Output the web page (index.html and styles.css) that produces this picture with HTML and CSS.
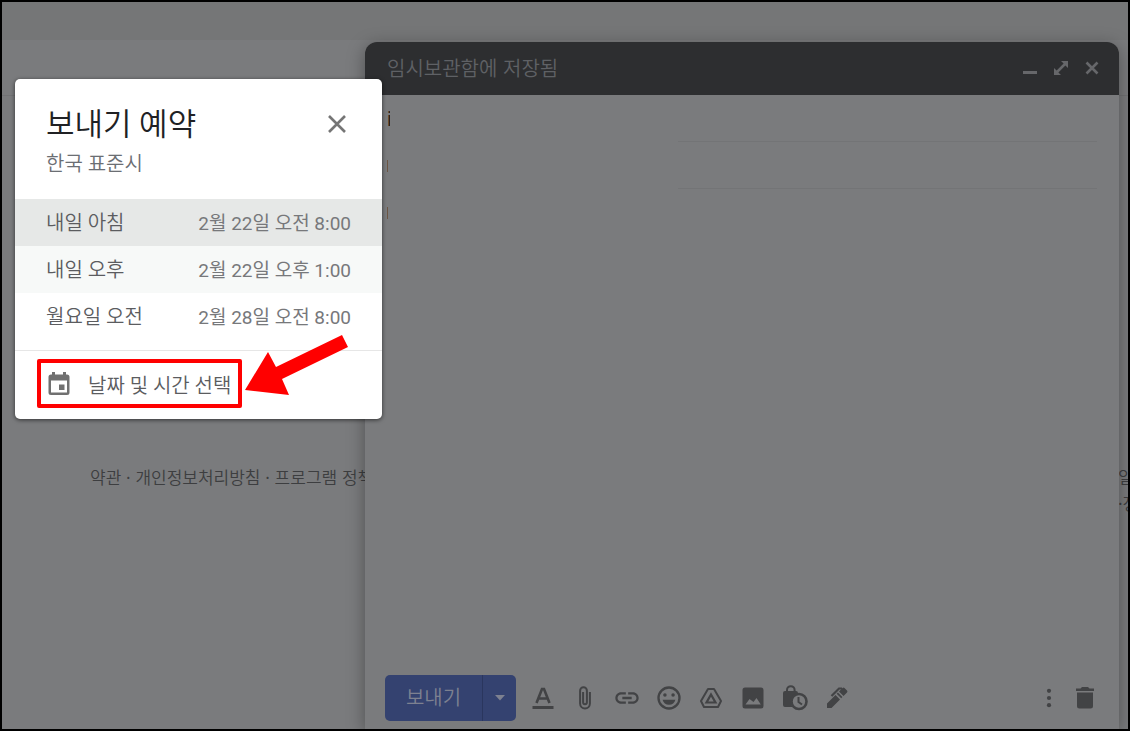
FILE: index.html
```html
<!DOCTYPE html>
<html lang="ko">
<head>
    <meta charset="UTF-8">
    <meta name="viewport" content="width=device-width, initial-scale=1.0">
    <title>보내기 예약</title>
    <link rel="stylesheet" href="styles.css">
</head>
<body>
    <div class="screen">
        <div class="topbar"></div>
        <div class="list"></div>
        <footer class="footer">
            <div>약관 · 개인정보처리방침 · 프로그램 정책</div>
            <div class="activity">
                <div>일</div>
                <div>·정</div>
            </div>
        </footer>

        <section class="compose">
            <header class="compose-header">
                <span class="compose-title">임시보관함에 저장됨</span>
                <button class="icon-btn" aria-label="최소화">
                    <svg width="16" height="16" viewBox="0 0 16 16"><path d="M1 11h14v3H1z"/></svg>
                </button>
                <button class="icon-btn" aria-label="전체화면">
                    <svg width="16" height="16" viewBox="0 0 16 16"><path d="M8 1h7v7l-2.600-2.600-7 7L8 15H1V8l2.600 2.600 7-7z"/></svg>
                </button>
                <button class="icon-btn" aria-label="닫기">
                    <svg width="16" height="16" viewBox="0 0 16 16"><path d="M2.500 2.500l11 11M13.500 2.500l-11 11" fill="none" stroke="currentColor" stroke-width="2.600"/></svg>
                </button>
            </header>
            <div class="compose-body">
                <div class="field"><span class="letter">i</span><span class="line"></span></div>
                <div class="field"><span class="caret"></span><span class="line"></span></div>
                <div class="field"><span class="caret"></span></div>
            </div>
            <div class="toolbar">
                <div class="send-group">
                    <button class="send">보내기</button>
                    <button class="send-more" aria-label="보내기 옵션 더보기">
                        <svg width="10" height="6" viewBox="0 0 10 6"><path d="M0 0h10L5 5.500z"/></svg>
                    </button>
                </div>
                <button class="icon-btn" aria-label="서식 옵션">
                    <svg width="28" height="28" viewBox="0 0 28 28"><path d="M3.500 22h21v3h-21z"/><path d="M7.500 19L13 5h2l5.500 14M9.500 14.500h9" fill="none" stroke="currentColor" stroke-width="2.600"/></svg>
                </button>
                <button class="icon-btn" aria-label="파일 첨부">
                    <svg width="28" height="28" viewBox="0 0 28 28"><path d="M18.900 8v11.500a4.900 4.900 0 0 1-9.800 0V6.700a3.400 3.400 0 0 1 6.800 0v11.600a1.900 1.900 0 0 1-3.800 0V8" fill="none" stroke="currentColor" stroke-width="2"/></svg>
                </button>
                <button class="icon-btn" aria-label="링크 삽입">
                    <svg width="28" height="28" viewBox="0 0 24 24"><path d="M3.900 12c0-1.710 1.390-3.100 3.100-3.100h4V7H7c-2.760 0-5 2.240-5 5s2.240 5 5 5h4v-1.900H7c-1.710 0-3.100-1.390-3.100-3.100zM8 13h8v-2H8v2zm9-6h-4v1.900h4c1.710 0 3.100 1.390 3.100 3.100s-1.390 3.100-3.100 3.100h-4V17h4c2.760 0 5-2.240 5-5s-2.240-5-5-5z"/></svg>
                </button>
                <button class="icon-btn" aria-label="이모티콘 삽입">
                    <svg width="28" height="28" viewBox="0 0 24 24"><path d="M12 2a10 10 0 1 0 0 20 10 10 0 0 0 0-20zm0 18a8 8 0 1 1 0-16 8 8 0 0 1 0 16z"/><circle cx="8.500" cy="9.500" r="1.500"/><circle cx="15.500" cy="9.500" r="1.500"/><path d="M6.500 13.500h11c-.6 2.700-2.700 4.300-5.500 4.300s-4.900-1.600-5.500-4.300z"/></svg>
                </button>
                <button class="icon-btn" aria-label="드라이브를 사용하여 파일 삽입">
                    <svg width="28" height="28" viewBox="0 0 28 28"><path d="M11 5h6l7 12-3 6H7l-3-6z" fill="none" stroke="currentColor" stroke-width="2" stroke-linejoin="round"/><path d="M14 10.500l4.500 8h-9z" fill="none" stroke="currentColor" stroke-width="2.200"/></svg>
                </button>
                <button class="icon-btn" aria-label="사진 삽입">
                    <svg width="28" height="28" viewBox="0 0 28 28"><path fill-rule="evenodd" d="M6 3.500h16a2.500 2.500 0 0 1 2.500 2.500v16a2.500 2.500 0 0 1-2.500 2.500H6A2.500 2.500 0 0 1 3.500 22V6A2.500 2.500 0 0 1 6 3.500zM6.500 20.500h15.300L17.500 14l-3 4-4-3z"/></svg>
                </button>
                <button class="icon-btn" aria-label="비밀 모드 사용 설정">
                    <svg width="28" height="28" viewBox="0 0 28 28"><path d="M2 9a2 2 0 0 1 2-2h11a2 2 0 0 1 2 2v1c-4 1-7 4-7 8 0 2 .6 3.500 1.500 5H4a2 2 0 0 1-2-2z"/><path d="M6 8V6a3.800 3.800 0 0 1 7.600 0v2" fill="none" stroke="currentColor" stroke-width="2"/><circle cx="18" cy="17.500" r="7.500" fill="none" stroke="currentColor" stroke-width="2.600"/><path d="M17.500 13v5l3.500 2.500" fill="none" stroke="currentColor" stroke-width="2"/></svg>
                </button>
                <button class="icon-btn" aria-label="서명 삽입">
                    <svg width="28" height="28" viewBox="0 0 28 28"><path d="M4 24v-4.500l8.500-8.500 4.500 4.500L8.500 24zM13.700 9.800l1.200-1.200 4.500 4.500-1.200 1.200zM16 7.500L19.500 4a1.500 1.500 0 0 1 2 0l2.500 2.500a1.500 1.500 0 0 1 0 2L20.500 12z"/><path d="M8.500 12l7.500-7.500h3" fill="none" stroke="currentColor" stroke-width="2.200"/></svg>
                </button>
                <button class="icon-btn more" aria-label="옵션 더보기">
                    <svg width="28" height="28" viewBox="0 0 28 28"><circle cx="14" cy="6.800" r="2.100"/><circle cx="14" cy="14" r="2.100"/><circle cx="14" cy="21.200" r="2.100"/></svg>
                </button>
                <button class="icon-btn" aria-label="임시보관 메일 삭제">
                    <svg width="28" height="28" viewBox="0 0 28 28"><path d="M5 4.500h4.500L11 3h6l1.500 1.500H23V7H5zM6 8.500h16V22a2.500 2.500 0 0 1-2.500 2.500h-11A2.500 2.500 0 0 1 6 22z"/></svg>
                </button>
            </div>
        </section>

        <section class="dialog" role="dialog" aria-labelledby="dialogTitle">
            <header class="dialog-header">
                <div>
                    <h2 id="dialogTitle">보내기 예약</h2>
                    <p>한국 표준시</p>
                </div>
                <button class="close" aria-label="닫기">
                    <svg width="20" height="20" viewBox="0 0 20 20"><path d="M2 2l16 16M18 2L2 18" fill="none" stroke="currentColor" stroke-width="2.600"/></svg>
                </button>
            </header>
            <div class="options">
                <button class="option selected"><span>내일 아침</span><span class="time">2월 22일 오전 8:00</span></button>
                <button class="option hover"><span>내일 오후</span><span class="time">2월 22일 오후 1:00</span></button>
                <button class="option"><span>월요일 오전</span><span class="time">2월 28일 오전 8:00</span></button>
            </div>
            <button class="pick-date">
                <svg width="24" height="24" viewBox="0 0 24 24"><path fill-rule="evenodd" d="M4 2.500h1V0h3v2.500h8V0h3v2.500h1a2.500 2.500 0 0 1 2.500 2.500v15.500A2.500 2.500 0 0 1 20 23H4a2.500 2.500 0 0 1-2.500-2.500V5A2.500 2.500 0 0 1 4 2.500zM4 8.500v12h16v-12zM12 12.500h5.500V18H12z"/></svg>
                <span>날짜 및 시간 선택</span>
            </button>
            <div class="highlight"></div>
            <svg class="arrow" width="104" height="62" viewBox="0 0 104 62"><path d="M0 55L23 17l8 15L97 0l6 12-66 32 7 16z"/></svg>
        </section>
    </div>
</body>
</html>
```
FILE: styles.css
```css
* {
    box-sizing: border-box;
}
body {
    margin: 0;
    font-family: Roboto, "Noto Sans CJK KR", sans-serif;
    font-size: 20px;
    background: #7a7b7d;
}
button {
    margin: 0;
    padding: 0;
    border: none;
    background: none;
    font: inherit;
    color: inherit;
    cursor: pointer;
}
svg {
    display: block;
    fill: currentColor;
}
h2, p {
    margin: 0;
}
.screen {
    position: relative;
    min-height: 100vh;
    border: 2px solid #000;
    overflow: hidden;
}
.topbar {
    height: 38px;
    background: #757677;
}
.list {
    height: 56px;
    border-bottom: 1px solid #717274;
}
.footer {
    display: flex;
    justify-content: space-between;
    padding: 368px 0 0 88px;
    font-family: "Noto Sans CJK KR", sans-serif;
    font-size: 17px;
    font-weight: 350;
    line-height: 26px;
    color: #3d3e40;
}
.activity {
    width: 10px;
    white-space: nowrap;
}

/* compose window */
.compose {
    position: absolute;
    top: 40px;
    left: 363px;
    right: 9px;
    bottom: 0;
    display: flex;
    flex-direction: column;
    background: #7a7b7d;
    border-radius: 12px 12px 0 0;
    box-shadow: 0 4px 18px rgba(0, 0, 0, 0.35);
    color: #424345;
}
.compose-header {
    display: flex;
    align-items: center;
    gap: 15px;
    height: 53px;
    padding: 0 19px 2px 22px;
    background: #2d2e30;
    border-radius: 12px 12px 0 0;
    color: #66676a;
}
.compose-title {
    flex: 1;
    font-family: "Noto Sans CJK KR", sans-serif;
    font-weight: 350;
    color: #5f6165;
}
.compose-body {
    flex: 1;
    padding: 0 22px;
}
.field {
    display: flex;
    justify-content: space-between;
    align-items: center;
    height: 47px;
}
.letter {
    width: 3px;
    overflow: hidden;
    color: #2c2118;
}
.caret {
    width: 1px;
    height: 12px;
    background: #6b5544;
}
.line {
    align-self: flex-end;
    width: 59%;
    height: 1px;
    background: #737476;
}
.toolbar {
    display: flex;
    align-items: center;
    gap: 14px;
    padding: 0 20px 8px 20px;
}
.send-group {
    display: flex;
    height: 46px;
    margin-right: -1px;
    border-radius: 5px;
    overflow: hidden;
    background: #344270;
    color: #7d8190;
}
.send {
    width: 98px;
    padding-bottom: 3px;
    border-right: 1px solid #2a365e;
    font-weight: 350;
}
.send-more {
    display: flex;
    align-items: center;
    justify-content: center;
    width: 33px;
}
.more {
    margin-left: auto;
}
.toolbar .more + .icon-btn {
    margin-left: -6px;
}

/* schedule dialog */
.dialog {
    position: absolute;
    top: 77px;
    left: 13px;
    width: 367px;
    background: #fff;
    border-radius: 5px;
    box-shadow: 0 1px 4px rgba(0, 0, 0, 0.6);
    color: #5b5c5f;
    font-weight: 350;
}
.dialog-header {
    display: flex;
    justify-content: space-between;
    padding: 25px 35px 17px 31px;
}
.dialog-header h2 {
    font-size: 31px;
    font-weight: 350;
    line-height: 42px;
    color: #202124;
}
.dialog-header p {
    line-height: 36px;
    color: #6b6e73;
}
.close {
    align-self: flex-start;
    margin-top: 10px;
    color: #757575;
}
.option {
    display: flex;
    justify-content: space-between;
    align-items: center;
    width: 100%;
    height: 47px;
    padding: 0 31px 3px;
}
.option.selected {
    background: #e6e8e7;
}
.option.hover {
    background: #f7f9f8;
}
.time {
    font-size: 19px;
    font-weight: 400;
    color: #77787b;
}
.options {
    padding-bottom: 10px;
    border-bottom: 1px solid #e6e6e6;
}
.pick-date {
    display: flex;
    align-items: center;
    gap: 17px;
    width: 100%;
    height: 68px;
    padding: 0 32px 2px;
}
.pick-date svg {
    color: #707070;
}

/* annotation */
.highlight {
    position: absolute;
    left: 22px;
    bottom: 11px;
    width: 205px;
    height: 49px;
    border: 4px solid #f00;
    border-radius: 2px;
    pointer-events: none;
}
.arrow {
    position: absolute;
    left: 230px;
    bottom: 22px;
    color: #f00;
}
```
